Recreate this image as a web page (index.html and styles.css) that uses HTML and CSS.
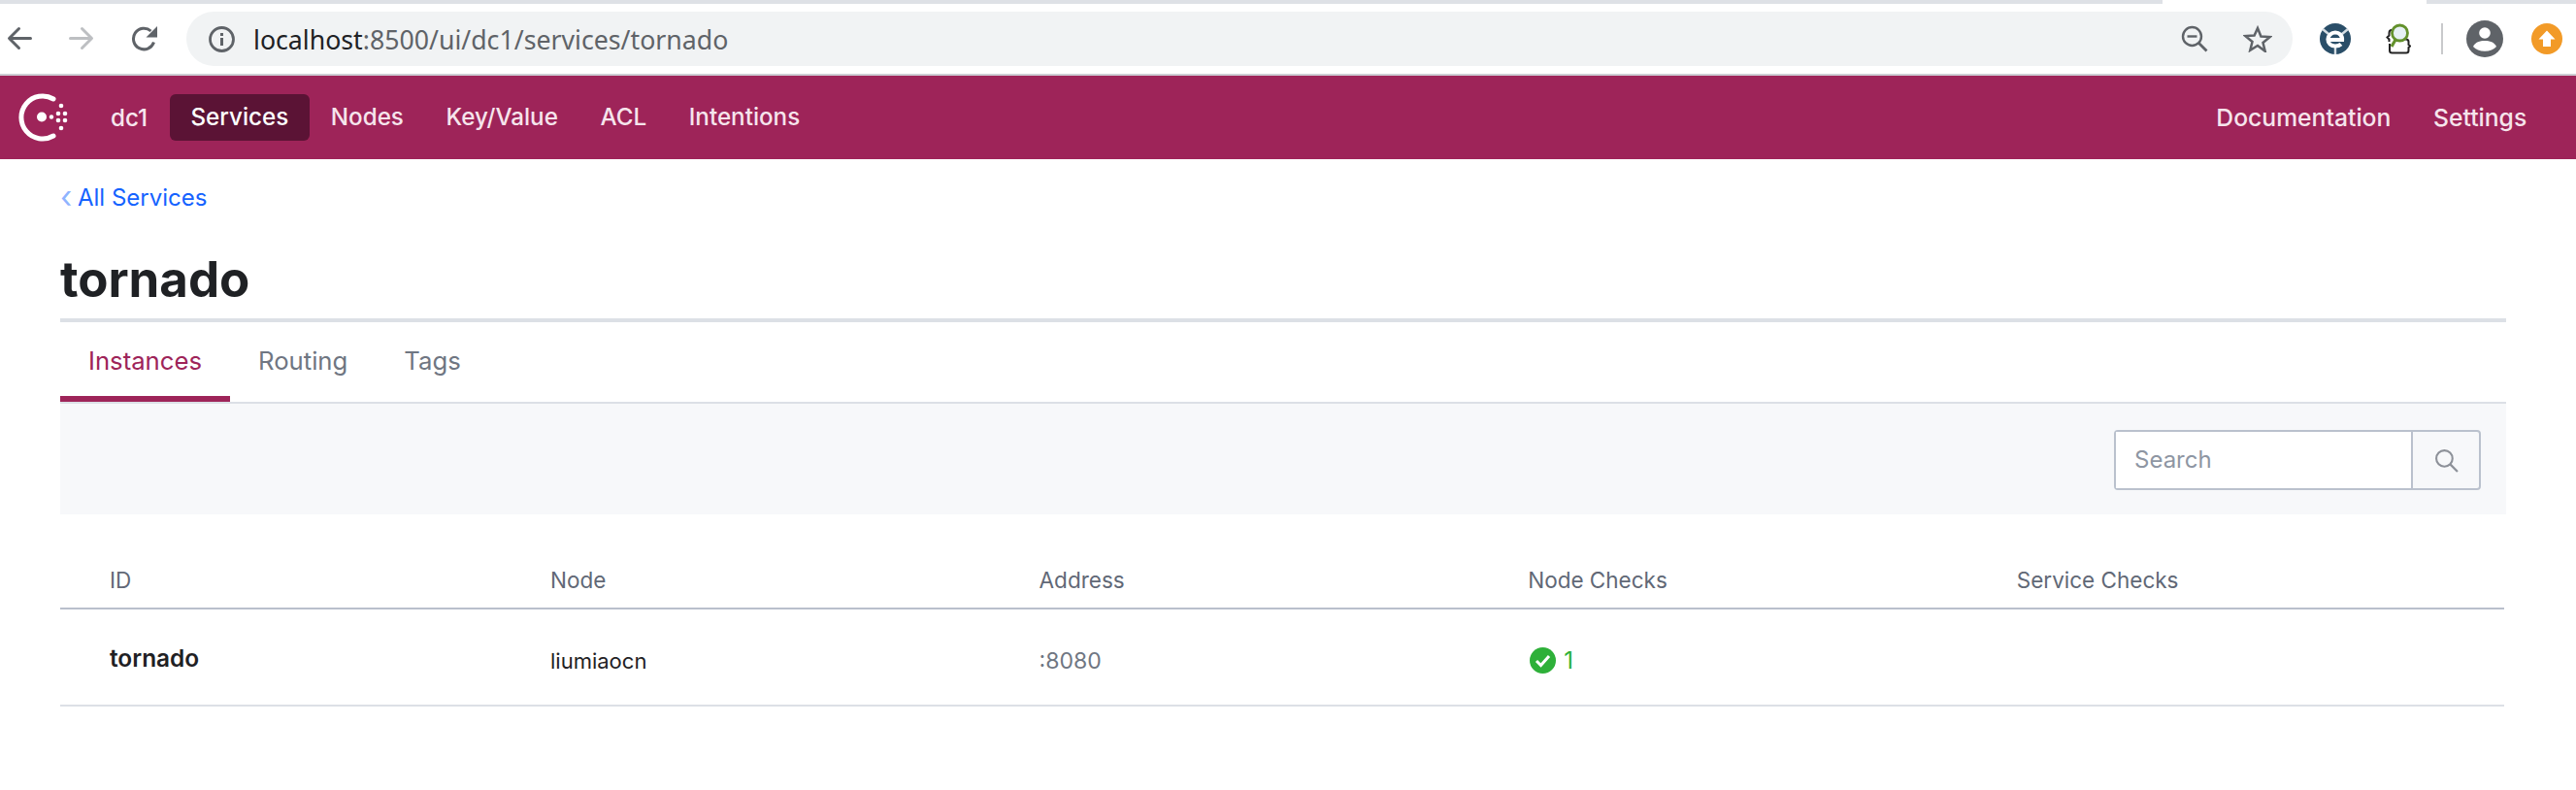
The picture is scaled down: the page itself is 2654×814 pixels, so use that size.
FILE: index.html
```html
<!DOCTYPE html>
<html lang="en">
<head>
<meta charset="utf-8">
<title>tornado - Consul</title>
<link rel="stylesheet" href="styles.css">
</head>
<body>
<div class="tabstrip"><span class="tabstrip-gap"></span></div>
<div class="chrome">
  <svg class="ic ic-back" viewBox="0 0 26 26"><path d="M24.500 12.500H3M12.500 2.500 2.500 12.500l10 10" fill="none" stroke="#5f6368" stroke-width="3" stroke-linecap="round" stroke-linejoin="round"/></svg>
  <svg class="ic ic-fwd" viewBox="0 0 26 26"><path d="M1.500 12.500H23M13.500 2.500l10 10-10 10" fill="none" stroke="#bdbfc2" stroke-width="3" stroke-linecap="round" stroke-linejoin="round"/></svg>
  <svg class="ic ic-reload" viewBox="0 0 28 28"><path d="M23.500 17.500A10.800 10.800 0 1 1 20.500 6" fill="none" stroke="#5f6368" stroke-width="3"/><path d="M27 1v11.500H15.500z" fill="#5f6368"/></svg>
  <div class="omnibox">
    <svg class="ic-info" viewBox="0 0 27 27"><circle cx="13.500" cy="13.500" r="12" fill="none" stroke="#5f6368" stroke-width="2.800"/><path d="M12 12h3v8h-3zM12 7h3v3h-3z" fill="#5f6368"/></svg>
    <span class="url"><span class="url-host">localhost</span>:8500/ui/dc1/services/tornado</span>
    <svg class="ic-zoom" viewBox="0 0 28 28"><circle cx="11.500" cy="11.500" r="9.500" fill="none" stroke="#5f6368" stroke-width="2.400"/><path d="M18.500 18.500l8 8" stroke="#5f6368" stroke-width="2.800"/><path d="M6.500 11.500h10" stroke="#5f6368" stroke-width="2.400"/></svg>
    <svg class="ic-star" viewBox="0 0 30 28"><path d="M15 3l3.400 8.500 9.100.6-7 5.900 2.200 8.800L15 21l-7.700 4.800 2.200-8.800-7-5.900 9.100-.6z" fill="none" stroke="#5f6368" stroke-width="2.500"/></svg>
  </div>
  <svg class="ext ext-e" viewBox="0 0 32 32"><circle cx="16" cy="16" r="16" fill="#2a4e68"/><path d="M3 6l6 5M29 6l-6 5M16 25v7" stroke="#d5dde3" stroke-width="2.400"/><path d="M10 17h13c.3-4.500-3-7.500-7-7.500s-7.500 3-7.500 7 3 7 7.500 7c2.500 0 4.500-.7 6-2" fill="none" stroke="#fff" stroke-width="4.200"/></svg>
  <svg class="ext ext-code" viewBox="0 0 26 32"><path d="M6 7C4 7 3.500 8.500 3.500 10v2.500L1.500 14.500l2 2V19M4 21v7c0 1.500 1 2.500 2.500 2.500H21c1.500 0 2.500-1 2.500-2.500v-3l1.500-1.500-1.500-1.500v-3c0-1.500-1-2.500-2.500-2.500h-2" fill="none" stroke="#222" stroke-width="2"/><circle cx="14.500" cy="10" r="8" fill="#e6f0f4" stroke="#63912c" stroke-width="2.800"/><path d="M10 17l-4 7" stroke="#63912c" stroke-width="3.200"/></svg>
  <span class="ext-sep"></span>
  <svg class="avatar" viewBox="0 0 38 38"><circle cx="19" cy="19" r="19" fill="#5f6368"/><circle cx="19" cy="13" r="5.800" fill="#fff"/><path d="M7 27c2-4.500 7-6 12-6s10 1.500 12 6c-2.500 3-7 4.800-12 4.800S9.500 30 7 27z" fill="#fff"/></svg>
  <svg class="update" viewBox="0 0 32 32"><circle cx="16" cy="16" r="16" fill="#f29a27"/><path d="M16 7.500l8.500 9H20V24h-8v-7.500H7.500z" fill="#fff"/></svg>
</div>
<header class="topnav">
  <svg class="logo" viewBox="0 0 52 52"><path d="M37 7A22 22 0 1 0 37 45" fill="none" stroke="#fff" stroke-width="5" stroke-linecap="round"/><circle cx="25" cy="25.500" r="5" fill="#fff"/><g fill="#fff"><circle cx="35" cy="25.500" r="2.200"/><circle cx="45" cy="14" r="2.300"/><circle cx="42" cy="22" r="2.300"/><circle cx="49" cy="22" r="2.300"/><circle cx="42" cy="29" r="2.300"/><circle cx="49" cy="29" r="2.300"/><circle cx="45" cy="37" r="2.300"/></g></svg>
  <span class="dc">dc1</span>
  <nav class="nav-main">
    <a class="nav-item nav-active">Services</a>
    <a class="nav-item">Nodes</a>
    <a class="nav-item">Key/Value</a>
    <a class="nav-item">ACL</a>
    <a class="nav-item">Intentions</a>
  </nav>
  <nav class="nav-side">
    <a class="nav-item">Documentation</a>
    <a class="nav-item">Settings</a>
  </nav>
</header>
<main class="content">
  <div class="crumb"><span class="crumb-arrow">‹</span><a class="crumb-link">All Services</a></div>
  <h1 class="title">tornado</h1>
  <div class="tabs">
    <a class="tab tab-active">Instances</a>
    <a class="tab">Routing</a>
    <a class="tab">Tags</a>
  </div>
  <div class="filter">
    <div class="search">
      <span class="search-input">Search</span>
      <span class="search-btn"><svg class="ic-search" viewBox="0 0 24 24"><circle cx="10" cy="10" r="8" fill="none" stroke="#8d9199" stroke-width="2"/><path d="M15.500 15.500l7.500 7.500" stroke="#8d9199" stroke-width="2.200"/></svg></span>
    </div>
  </div>
  <div class="table">
    <div class="row row-head">
      <span class="cell">ID</span>
      <span class="cell">Node</span>
      <span class="cell">Address</span>
      <span class="cell">Node Checks</span>
      <span class="cell">Service Checks</span>
    </div>
    <div class="row row-body">
      <span class="cell cell-id">tornado</span>
      <span class="cell cell-node">liumiaocn</span>
      <span class="cell cell-addr">:8080</span>
      <span class="cell cell-check"><svg class="ic-check" viewBox="0 0 27 27"><circle cx="13.500" cy="13.500" r="13.500" fill="#2eb039"/><path d="M7 14l4.500 4.500L20 9" fill="none" stroke="#fff" stroke-width="3"/></svg>1</span>
      <span class="cell"></span>
    </div>
  </div>
</main>
</body>
</html>
```

FILE: styles.css
```css
* { box-sizing: border-box; }
html, body { margin: 0; padding: 0; background: #fff; }
body { font-family: Inter, "Liberation Sans", sans-serif; width: 2654px; height: 814px; overflow: hidden; }

.tabstrip { height: 4px; background: #dee1e6; display: flex; justify-content: flex-end; padding-right: 154px; }
.tabstrip-gap { width: 272px; background: #fff; }

.chrome { height: 74px; display: flex; align-items: center; padding: 0 14px 0 7px; border-bottom: 2px solid #cdced4; }
.chrome svg { flex: none; }
.ic-back { width: 26px; height: 26px; }
.ic-fwd { width: 26px; height: 26px; margin-left: 38px; }
.ic-reload { width: 28px; height: 28px; margin-left: 38px; }
.omnibox { width: 2170px; height: 56px; margin-left: 29px; background: #f1f3f4; border-radius: 28px; display: flex; align-items: center; padding: 0 21px 0 23px; }
.ic-info { width: 27px; height: 27px; }
.url { margin-left: 19px; font-family: "Noto Sans", "Liberation Sans", sans-serif; font-size: 26.7px; color: #5f6368; flex: 1; white-space: nowrap; }
.url-host { color: #202124; }
.ic-zoom { width: 28px; height: 28px; }
.ic-star { width: 30px; height: 28px; margin-left: 36px; }
.ext-e { width: 32px; height: 32px; margin-left: 28px; }
.ext-code { width: 26px; height: 32px; margin-left: 36px; }
.ext-sep { width: 2px; height: 32px; background: #c9cacc; margin-left: 31px; flex: none; }
.avatar { width: 38px; height: 38px; margin-left: 24px; }
.update { width: 32px; height: 32px; margin-left: 29px; }

.topnav { height: 86px; background: #9e2459; display: flex; align-items: center; color: #fff; font-size: 24.2px; font-weight: 500; padding: 0 29px 0 18px; }
.logo { width: 52px; height: 52px; flex: none; }
.dc { margin-left: 44px; margin-right: 22.5px; color: #f7e6ee; }
.nav-main, .nav-side { display: flex; align-items: center; }
.nav-side { margin-left: auto; font-size: 24.7px; }
.nav-item { padding: 0 21.8px; height: 48px; line-height: 48px; border-radius: 6px; color: #f6e4ec; white-space: nowrap; }
.nav-active { background: #5b1335; color: #fff; }

.content { margin: 0 72px 0 62px; }
.crumb { height: 78px; display: flex; align-items: center; font-size: 24px; }
.crumb-arrow { color: #8fb4ff; width: 18px; font-size: 32px; line-height: 32px; }
.crumb-link { color: #1563ff; }
.title { margin: 0; height: 90px; font-size: 51px; font-weight: 700; line-height: 92px; color: #1f2124; border-bottom: 4px solid #dce0e6; }
.tabs { display: flex; height: 84px; border-bottom: 2px solid #dce0e6; font-size: 25.7px; }
.tab { padding: 0 29px; line-height: 80px; height: 82px; color: #6f7682; }
.tab-active { color: #9e2459; border-bottom: 6px solid #9e2459; }
.filter { height: 114px; background: #f7f8fa; display: flex; justify-content: flex-end; align-items: center; padding: 2px 26px 0 0; }
.search { width: 378px; height: 62px; display: flex; border: 2px solid #bac1cd; border-radius: 4px; }
.search-input { flex: 1; background: #fff; border-right: 2px solid #bac1cd; font-size: 24px; line-height: 58px; padding-left: 19px; color: #8e96a3; }
.search-btn { width: 68px; display: flex; align-items: center; justify-content: center; }
.ic-search { width: 25px; height: 25px; }

.table { margin-top: 36px; width: 2518px; font-size: 22.5px; }
.row { display: grid; grid-template-columns: 454px repeat(4, 503.6px); align-items: center; }
.row-head { height: 62px; border-bottom: 2px solid #b9bfcc; color: #616876; padding-top: 2px; }
.row-body { height: 100px; border-bottom: 2px solid #dce0e6; color: #1f2124; }
.cell { padding-left: 51px; }
.cell-id { font-weight: 600; font-size: 24.4px; padding-top: 2px; }
.cell-node { font-size: 22px; padding-top: 8px; }
.cell-addr { color: #6f7682; font-size: 23px; padding-top: 8px; }
.cell-check { color: #2eb039; display: flex; align-items: center; gap: 8px; font-size: 24px; padding-left: 53px; padding-top: 6px; }
.ic-check { width: 27px; height: 27px; }
```
